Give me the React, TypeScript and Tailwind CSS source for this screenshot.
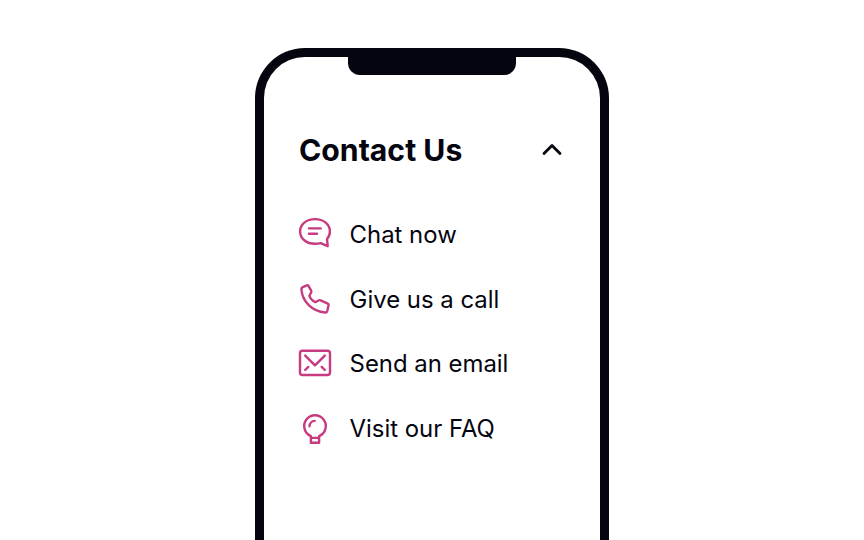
import type { ReactNode } from "react";

function Icon({ children }: { children: ReactNode }) {
  return (
    <svg
      className="h-9 w-9 shrink-0 text-[#c73b80]"
      viewBox="0 0 36 36"
      fill="none"
      stroke="currentColor"
      strokeWidth="2.4"
      strokeLinecap="round"
      strokeLinejoin="round"
    >
      {children}
    </svg>
  );
}

const items = [
  {
    label: "Chat now",
    icon: (
      <Icon>
        <path d="M30.7 30.2 23.6 27.1C21.9 27.6 20 27.8 18 27.8 9.3 27.8 3.1 22.4 3.1 15.4S9.3 3.1 18 3.1 32.9 8.4 32.9 15.4C32.9 18.7 31.8 21 30 23Z" />
        <path d="M12 12.4h11.7M12 17.8h8" />
      </Icon>
    ),
  },
  {
    label: "Give us a call",
    icon: (
      <Icon>
        <path d="M5.8 6.1 9.8 4.4Q11 4 11.6 5.1L14.2 9.7Q14.6 10.6 14.1 11.5L12.4 14.8C13.3 17.5 15.7 19.9 18.4 21.2L21.9 19.3Q22.7 18.9 23.6 19.3L30.8 22.6Q31.9 23.2 31.6 24.3L30.2 30.1Q29.8 31.6 28.3 31.5C15 30.3 5.4 20.6 4.4 8.3Q4.3 6.7 5.8 6.1Z" />
      </Icon>
    ),
  },
  {
    label: "Send an email",
    icon: (
      <Icon>
        <rect x="3" y="5.8" width="30" height="24.2" rx="2.5" />
        <path d="m8.2 10.6 9.8 9.7 9.8-9.7M8.2 25l3.1-3.1M27.8 25l-3.1-3.1" />
      </Icon>
    ),
  },
  {
    label: "Visit our FAQ",
    icon: (
      <Icon>
        <path d="M13.9 26.1A10.8 10.8 0 1 1 22.1 26.1V32.7H13.9ZM13.9 27.9H22.1" />
        <path d="M12.5 16.3A5.5 5.5 0 0 1 17.7 10.9" />
      </Icon>
    ),
  },
];

export default function App() {
  return (
    <main className="flex h-[540px] justify-center overflow-hidden bg-white pt-12 font-['Inter',sans-serif] text-[#05050f]">
      <div className="h-[560px] w-[354px] shrink-0 rounded-t-[50px] border-[9px] border-b-0 border-[#05050f] bg-white">
        <div className="mx-auto h-[18px] w-[168px] rounded-b-xl bg-[#05050f]" />
        <section className="px-[35px] pt-[55px]">
          <header className="flex h-10 items-center justify-between">
            <h1 className="text-[30.2px] leading-10 font-bold">Contact Us</h1>
            <svg
              className="mr-px h-6 w-6"
              viewBox="0 0 24 24"
              fill="none"
              stroke="currentColor"
              strokeWidth="2.8"
              strokeLinecap="round"
              strokeLinejoin="round"
            >
              <path d="m4 15.6 8-8.2 8 8.2" />
            </svg>
          </header>
          <ul className="-ml-0.5 pt-8">
            {items.map(({ label, icon }) => (
              <li key={label} className="flex h-[64.5px] items-center gap-[16.6px]">
                {icon}
                <span className="pt-[1.5px] text-[23.9px] leading-8">{label}</span>
              </li>
            ))}
          </ul>
        </section>
      </div>
    </main>
  );
}
